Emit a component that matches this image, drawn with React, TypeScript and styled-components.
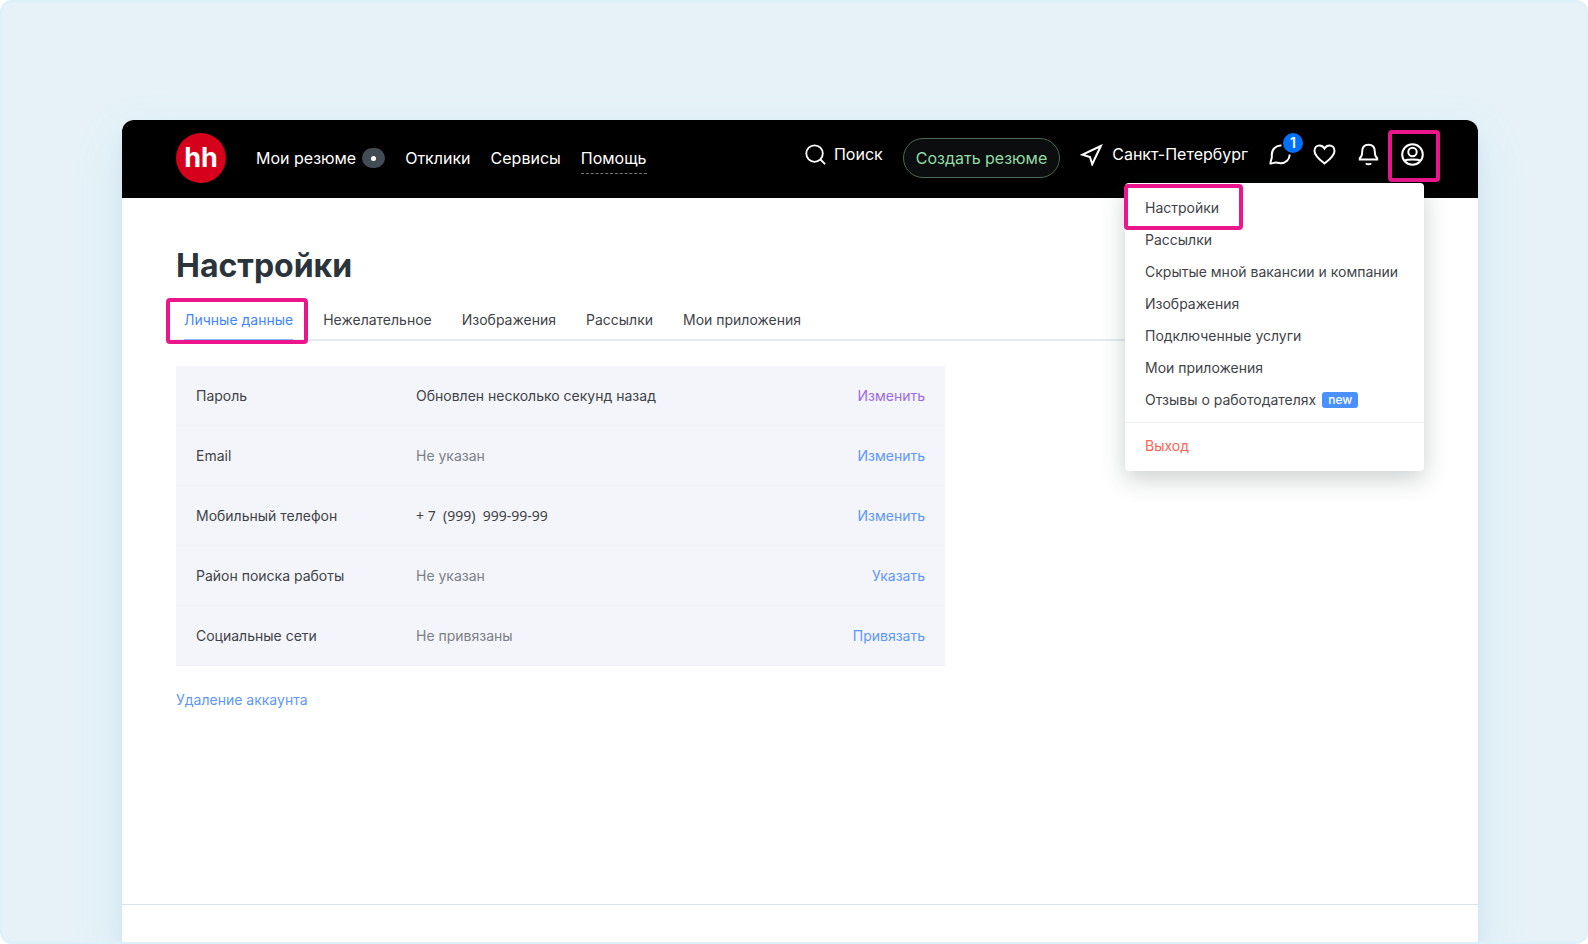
import React, { useState } from "react";
import styled, { createGlobalStyle, ThemeProvider } from "styled-components";

const theme = {
  text: "#3f4347",
  heading: "#2b343b",
  muted: "#7b8087",
  link: "#5e97fb",
  visited: "#9a6ae6",
  active: "#3f86ff",
  danger: "#ff6357",
  line: "#e4ebf1",
  mark: "#ec168c",
};

const GlobalStyle = createGlobalStyle`
  *, *::before, *::after { box-sizing: border-box; }
  body {
    margin: 0;
    background: #fff;
    color: ${theme.text};
    font-family: Inter, "Liberation Sans", sans-serif;
    font-size: 14px;
    line-height: 20px;
  }
  a { color: inherit; text-decoration: none; }
  button { font: inherit; color: inherit; cursor: pointer; }
`;

const Frame = styled.div`
  display: flex;
  min-height: 100vh;
  padding: 118px 108px 0 120px;
  border: 2px solid #dbf2fa;
  border-radius: 12px;
  background: #e6f2f8;
  overflow: hidden;
`;

const Window = styled.div`
  display: flex;
  flex: 1;
  flex-direction: column;
  border-radius: 12px 12px 0 0;
  background: #fff;
  box-shadow: 0 12px 12px rgba(150, 180, 230, 0.16), 0 20px 48px rgba(130, 195, 220, 0.2);
`;

const Header = styled.header`
  display: flex;
  align-items: center;
  justify-content: space-between;
  padding: 13px 54px 15px;
  border-radius: 12px 12px 0 0;
  background: #000;
  color: #fff;
  font-size: 16px;
  line-height: 24px;
`;

const Nav = styled.nav`
  display: flex;
  align-items: center;
  gap: 20px;
`;

const Logo = styled.a`
  display: flex;
  align-items: center;
  justify-content: center;
  width: 50px;
  height: 50px;
  margin-right: 10px;
  border-radius: 50%;
  background: #d6001c;
  font-size: 27px;
  font-weight: 700;
`;

const NavLink = styled.a<{ $dashed?: boolean }>`
  display: flex;
  align-items: center;
  gap: 6px;
  padding: 4px 0 3px;
  border-bottom: 1px dashed ${(p) => (p.$dashed ? "#777" : "transparent")};
`;

const DotBadge = styled.span`
  display: flex;
  align-items: center;
  justify-content: center;
  width: 23px;
  height: 20px;
  border-radius: 10px;
  background: #434b55;

  &::before {
    content: "";
    width: 5px;
    height: 5px;
    border-radius: 50%;
    background: #fff;
  }
`;

const Tools = styled.div`
  display: flex;
  align-items: flex-start;
  gap: 20px;
  height: 40px;
`;

const Tool = styled.button`
  position: relative;
  display: flex;
  align-items: center;
  gap: 8px;
  height: 32px;
  padding: 0;
  border: 0;
  background: none;
`;

const CreateButton = styled.button`
  height: 40px;
  padding: 0 12px;
  border: 1px solid #4a6b54;
  border-radius: 20px;
  background: #0b0d0f;
  color: #93dba5;
`;

const Counter = styled.span`
  position: absolute;
  top: -5px;
  left: 15px;
  width: 20px;
  height: 20px;
  border-radius: 50%;
  background: #0070ff;
  font-size: 14px;
  font-weight: 600;
  line-height: 20px;
  text-align: center;
`;

const MenuAnchor = styled.div`
  position: relative;
`;

const Mark = styled.span<{ $inset: string }>`
  position: absolute;
  inset: ${(p) => p.$inset};
  border: 4px solid ${theme.mark};
  border-radius: 4px;
  pointer-events: none;
`;

const Menu = styled.div`
  position: absolute;
  z-index: 1;
  top: 45px;
  right: 0;
  width: 299px;
  padding: 9px 0;
  border-radius: 4px;
  background: #fff;
  box-shadow: 0 8px 24px rgba(40, 60, 60, 0.24);
  color: ${theme.text};
  font-size: 14px;
`;

const MenuItem = styled.a<{ $danger?: boolean }>`
  display: flex;
  align-items: center;
  gap: 6px;
  padding: 0 20px;
  line-height: 32px;
  white-space: nowrap;
  color: ${(p) => (p.$danger ? p.theme.danger : p.theme.text)};
`;

const MenuLabel = styled.span`
  position: relative;
`;

const MenuDivider = styled.hr`
  margin: 6px 0 7px;
  border: 0;
  border-top: 1px solid #eaf1f8;
`;

const NewTag = styled.span`
  padding: 0 6px;
  border-radius: 3px;
  background: #4a90ff;
  color: #fff;
  font-size: 12px;
  font-weight: 500;
  line-height: 16px;
`;

const Main = styled.main`
  flex: 1;
  padding: 48px 54px 40px;
`;

const Title = styled.h1`
  margin: 0;
  color: ${theme.heading};
  font-size: 32px;
  font-weight: 700;
  line-height: 40px;
`;

const Tabs = styled.nav`
  display: flex;
  gap: 30px;
  margin-top: 24px;
  padding-left: 8px;
  border-bottom: 2px solid ${theme.line};
`;

const Tab = styled.a<{ $active?: boolean }>`
  position: relative;
  margin-bottom: -2px;
  padding-bottom: 9px;
  border-bottom: 2px solid ${(p) => (p.$active ? "#8db5f5" : "transparent")};
  color: ${(p) => (p.$active ? p.theme.active : p.theme.text)};
`;

const Settings = styled.table`
  width: 100%;
  max-width: 769px;
  margin: 25px 0 24px;
  border-spacing: 0;
  table-layout: fixed;
  background: #f4f5fb;
`;

const SettingRow = styled.tr`
  height: 60px;

  th, td {
    padding: 0;
    border-bottom: 1px solid #f0f2f7;
  }
`;

const Name = styled.th`
  width: 240px;
  && { padding-left: 20px; }
  font-weight: 400;
  text-align: left;
`;

const Value = styled.td<{ $empty?: boolean }>`
  color: ${(p) => (p.$empty ? p.theme.muted : p.theme.text)};
`;

const Phone = styled.span`
  font-family: "Noto Sans", sans-serif;
  white-space: pre;
`;

const Action = styled.td`
  width: 160px;
  && { padding-right: 20px; }
  text-align: right;
`;

const Link = styled.a<{ $visited?: boolean }>`
  color: ${(p) => (p.$visited ? p.theme.visited : p.theme.link)};
`;

const Footer = styled.footer`
  height: 38px;
  border-top: 1px solid #d9e3ef;
`;

const Icon = ({ size = 24, children }: { size?: number; children: React.ReactNode }) => (
  <svg width={size} height={size} viewBox="0 0 24 24" fill="none" stroke="#fff" strokeWidth="2" aria-hidden="true">
    {children}
  </svg>
);

const menuItems = [
  "Рассылки",
  "Скрытые мной вакансии и компании",
  "Изображения",
  "Подключенные услуги",
  "Мои приложения",
];

const tabs = ["Нежелательное", "Изображения", "Рассылки", "Мои приложения"];

const settings = [
  { name: "Пароль", value: "Обновлен несколько секунд назад", action: "Изменить", visited: true },
  { name: "Email", value: "Не указан", empty: true, action: "Изменить" },
  { name: "Мобильный телефон", value: "+ 7  (999)  999-99-99", phone: true, action: "Изменить" },
  { name: "Район поиска работы", value: "Не указан", empty: true, action: "Указать" },
  { name: "Социальные сети", value: "Не привязаны", empty: true, action: "Привязать" },
];

export default function App() {
  const [open, setOpen] = useState(true);

  return (
    <ThemeProvider theme={theme}>
      <GlobalStyle />
      <Frame>
        <Window>
          <Header>
            <Nav>
              <Logo href="#">hh</Logo>
              <NavLink href="#">
                Мои резюме <DotBadge />
              </NavLink>
              <NavLink href="#">Отклики</NavLink>
              <NavLink href="#">Сервисы</NavLink>
              <NavLink href="#" $dashed>Помощь</NavLink>
            </Nav>
            <Tools>
              <Tool>
                <Icon size={22}>
                  <circle cx="11.5" cy="11.5" r="9" />
                  <path d="M18 18l5 5" />
                </Icon>
                Поиск
              </Tool>
              <CreateButton>Создать резюме</CreateButton>
              <Tool>
                <Icon>
                  <path d="M20.800 4L2.600 12.700l7.400 2.300 2.200 7.300z" />
                </Icon>
                Санкт-Петербург
              </Tool>
              <Tool aria-label="Сообщения">
                <Icon>
                  <path d="M13.5 3.600C8 3.200 3.800 7.200 3.800 12.400c0 2.200.2 3.200-.3 4.500-.4 1.200-1 2.500-1 4.600 2.200 0 3.700-.9 5-1 1.500-.1 2.600.7 4.900.7 5.400 0 9.300-3.800 9.300-8.700" />
                </Icon>
                <Counter>1</Counter>
              </Tool>
              <Tool aria-label="Избранное">
                <Icon>
                  <path d="M12.500 21.500C8 17.800 2.500 13.800 2.500 8.900c0-3.200 2.200-5.400 5-5.400 2 0 3.800 1 5 3 1.200-2 3-3 5-3 2.800 0 5 2.200 5 5.400 0 4.900-5.500 8.900-10 12.600z" />
                </Icon>
              </Tool>
              <Tool aria-label="Уведомления">
                <Icon>
                  <path d="M3.800 17.500v-1.500c1.800-1.200 2.400-2.600 2.400-6.500 0-4 2.200-6.700 6.300-6.700s6.300 2.700 6.300 6.700c0 3.900.6 5.300 2.400 6.500v1.500zM10 21.200c.8 1.400 4.200 1.400 5 0" />
                </Icon>
              </Tool>
              <MenuAnchor>
                <Tool aria-label="Профиль" aria-expanded={open} onClick={() => setOpen(!open)}>
                  <Icon>
                    <circle cx="12.500" cy="12.500" r="10.300" />
                    <circle cx="12.500" cy="10" r="4.200" />
                    <path d="M4.800 18.800c2-1.600 13.400-1.600 15.400 0" />
                  </Icon>
                  <Mark $inset="-8px -16px -12px -12px" />
                </Tool>
                {open && (
                  <Menu>
                    <MenuItem href="#">
                      <MenuLabel>
                        Настройки
                        <Mark $inset="-8px -24px -6px -21px" />
                      </MenuLabel>
                    </MenuItem>
                    {menuItems.map((item) => (
                      <MenuItem href="#" key={item}>{item}</MenuItem>
                    ))}
                    <MenuItem href="#">
                      Отзывы о работодателях <NewTag>new</NewTag>
                    </MenuItem>
                    <MenuDivider />
                    <MenuItem href="#" $danger>Выход</MenuItem>
                  </Menu>
                )}
              </MenuAnchor>
            </Tools>
          </Header>
          <Main>
            <Title>Настройки</Title>
            <Tabs>
              <Tab href="#" $active>
                Личные данные
                <Mark $inset="-12px -15px -5px -18px" />
              </Tab>
              {tabs.map((tab) => (
                <Tab href="#" key={tab}>{tab}</Tab>
              ))}
            </Tabs>
            <Settings>
              <tbody>
                {settings.map((row) => (
                  <SettingRow key={row.name}>
                    <Name scope="row">{row.name}</Name>
                    <Value $empty={row.empty}>{row.phone ? <Phone>{row.value}</Phone> : row.value}</Value>
                    <Action>
                      <Link href="#" $visited={row.visited}>{row.action}</Link>
                    </Action>
                  </SettingRow>
                ))}
              </tbody>
            </Settings>
            <Link href="#">Удаление аккаунта</Link>
          </Main>
          <Footer />
        </Window>
      </Frame>
    </ThemeProvider>
  );
}
